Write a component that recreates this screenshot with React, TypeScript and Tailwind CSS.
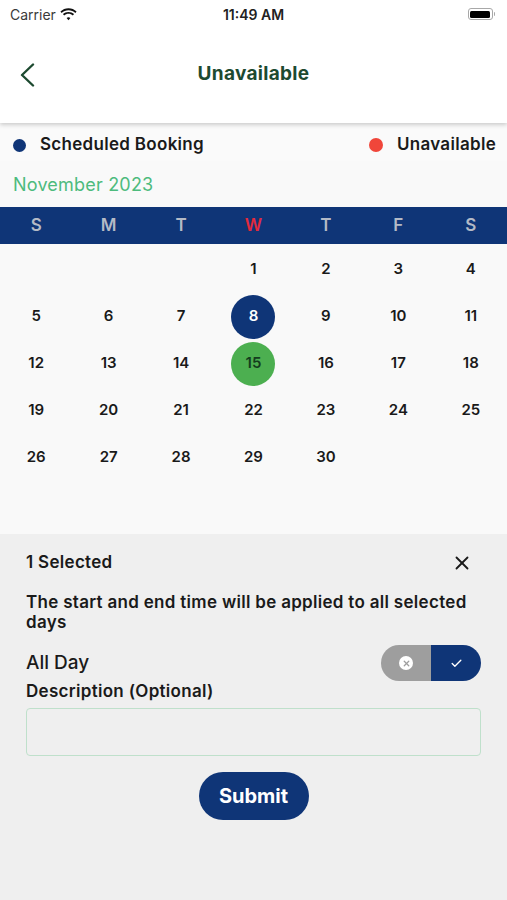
import { X, Check } from 'lucide-react';

const NAVY = 'bg-[#0f3577]';

const weekdays = ['S', 'M', 'T', 'W', 'T', 'F', 'S'];

// November 2023 starts on a Wednesday
const days: (number | null)[] = [
  null, null, null,
  ...Array.from({ length: 30 }, (_, i) => i + 1),
];

function StatusBar() {
  return (
    <div className="h-7 flex items-center justify-between px-[10px] text-[14px] text-[#222]">
      <div className="flex items-center gap-1 w-24">
        <span className="text-[#3a3a3a]">Carrier</span>
        <svg width="17" height="13" viewBox="0 0 17 13" fill="#111">
          <path d="M8.5 2.2c2.6 0 5 1 6.8 2.7l1.3-1.4C14.4 1.4 11.6.2 8.5.2S2.6 1.4.4 3.5l1.3 1.4C3.5 3.2 5.9 2.2 8.5 2.2z" />
          <path d="M8.5 5.8c1.6 0 3.1.6 4.3 1.7l1.3-1.4C12.6 4.7 10.6 3.9 8.5 3.9S4.4 4.7 2.9 6.1l1.3 1.4c1.2-1.1 2.7-1.7 4.3-1.7z" />
          <path d="M8.5 9.3c.7 0 1.4.3 1.9.8L8.5 12.2 6.6 10.1c.5-.5 1.2-.8 1.9-.8z" />
        </svg>
      </div>
      <span className="font-semibold">11:49 AM</span>
      <div className="flex items-center justify-end w-24 pr-[2px]">
        <div className="w-[25px] h-[12px] rounded-[3px] border border-[#a8a8a8] p-[1.5px]">
          <div className="w-full h-full rounded-[1.5px] bg-black" />
        </div>
        <div className="w-[1.5px] h-[4px] bg-[#a8a8a8] rounded-r-sm ml-[1px]" />
      </div>
    </div>
  );
}

function Header() {
  return (
    <div className="bg-white shadow-[0_2px_4px_rgba(0,0,0,0.18)] relative z-10">
      <StatusBar />
      <div className="h-[95px] flex items-center relative pb-[4px]">
        <button className="absolute left-[19px] top-[35px] text-[#1d4a30]">
          <svg width="16" height="24" viewBox="0 0 16 24" fill="none" stroke="currentColor" strokeWidth="2.4" strokeLinecap="round" strokeLinejoin="round">
            <path d="M14 1.5 3 12l11 10.5" />
          </svg>
        </button>
        <h1 className="flex-1 text-center text-[19px] tracking-[0.3px] font-bold text-[#1d4a30] mt-[1px]">
          Unavailable
        </h1>
      </div>
    </div>
  );
}

function Legend() {
  return (
    <div className="flex items-center justify-between pl-[13px] pr-[11px] h-[38px] pt-[6px]">
      <div className="flex items-center gap-[14px]">
        <span className={`w-[13px] h-[13px] rounded-full ${NAVY}`} />
        <span className="text-[17px] tracking-[0.3px] font-semibold text-[#1a1a1a]">Scheduled Booking</span>
      </div>
      <div className="flex items-center gap-[14px]">
        <span className="w-[14px] h-[14px] rounded-full bg-[#f0463a]" />
        <span className="text-[17px] tracking-[0.3px] font-semibold text-[#1a1a1a]">Unavailable</span>
      </div>
    </div>
  );
}

function Calendar() {
  return (
    <div className="bg-[#f9f9f9]">
      <div className="px-[13px] h-[46px] flex items-center">
        <span className="text-[18px] tracking-[0.2px] text-[#4dbb7d]">November 2023</span>
      </div>
      <div className={`grid grid-cols-7 h-[37px] items-center ${NAVY}`}>
        {weekdays.map((d, i) => (
          <span
            key={i}
            className={`text-center text-[17px] font-semibold ${i === 3 ? 'text-[#e32a3c]' : 'text-[#b4bac6]'}`}
          >
            {d}
          </span>
        ))}
      </div>
      <div className="grid grid-cols-7 pt-[2px] pb-[53px]">
        {days.map((d, i) => (
          <div key={i} className="h-[47px] flex items-center justify-center">
            {d === 8 ? (
              <span className={`w-[44px] h-[44px] rounded-full ${NAVY} text-white flex items-center justify-center text-[15px] font-semibold`}>
                8
              </span>
            ) : d === 15 ? (
              <span className="w-[44px] h-[44px] rounded-full bg-[#4caf50] text-[#143d1e] flex items-center justify-center text-[15px] font-semibold">
                15
              </span>
            ) : (
              <span className="text-[15px] font-semibold text-[#1a1a1a]">{d}</span>
            )}
          </div>
        ))}
      </div>
    </div>
  );
}

function AllDayToggle() {
  return (
    <div className="flex w-[100px] h-[36px] rounded-full overflow-hidden">
      <div className="flex-1 bg-[#9e9e9e] flex items-center justify-center">
        <span className="w-[14px] h-[14px] rounded-full bg-white flex items-center justify-center">
          <X size={9} strokeWidth={3.5} className="text-[#9e9e9e]" />
        </span>
      </div>
      <div className={`flex-1 ${NAVY} flex items-center justify-center`}>
        <Check size={13} strokeWidth={2.5} className="text-white" />
      </div>
    </div>
  );
}

function SelectionPanel() {
  return (
    <div className="bg-[#efefef] px-[26px] pt-[18px] pb-[81px]">
      <div className="flex items-center justify-between h-[22px]">
        <span className="text-[17px] tracking-[0.3px] font-semibold text-[#1a1a1a]">1 Selected</span>
        <X size={22} strokeWidth={2} className="text-[#1a1a1a] mr-[8px]" />
      </div>
      <p className="mt-[18px] text-[17px] tracking-[0.3px] leading-[20px] font-semibold text-[#1a1a1a]">
        The start and end time will be applied to all selected days
      </p>
      <div className="flex items-center justify-between mt-[13px] h-[36px]">
        <span className="text-[19px] font-medium text-[#1a1a1a]">All Day</span>
        <AllDayToggle />
      </div>
      <div className="text-[17px] tracking-[0.3px] font-semibold text-[#1a1a1a] leading-[20px]">
        Description (Optional)
      </div>
      <input
        className="mt-[7px] w-full h-[48px] rounded-[4px] border border-[#bfe0cb] bg-transparent outline-none px-3"
      />
      <div className="flex justify-center mt-[16px]">
        <button className={`w-[110px] h-[48px] rounded-full ${NAVY} text-white text-[20px] font-bold`}>
          Submit
        </button>
      </div>
    </div>
  );
}

export default function App() {
  return (
    <div className="w-[507px] min-h-[900px] bg-[#efefef] font-['Inter',sans-serif] flex flex-col">
      <Header />
      <div className="bg-[#fafafa]">
        <Legend />
      </div>
      <Calendar />
      <SelectionPanel />
    </div>
  );
}
